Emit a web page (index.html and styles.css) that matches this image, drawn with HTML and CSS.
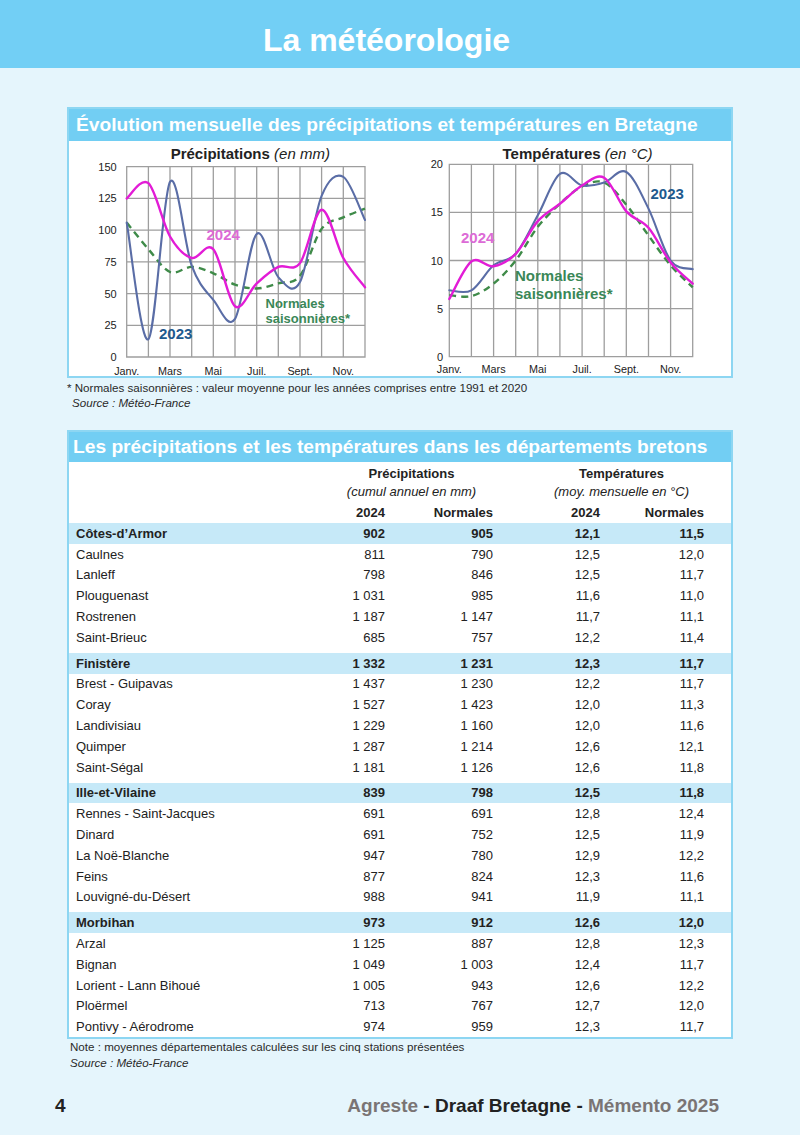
FILE: index.html
```html
<!DOCTYPE html>
<html lang="fr">
<head>
<meta charset="utf-8">
<title>La météorologie</title>
<link rel="stylesheet" href="styles.css">
</head>
<body>
<header class="page-header">
  <h1>La météorologie</h1>
</header>

<main class="content">
  <section class="panel panel-charts">
    <h2 class="panel-title">Évolution mensuelle des précipitations et températures en Bretagne</h2>
    <div class="charts">
      <svg class="chart" width="331" height="235" viewBox="0 0 331 235" data-x0="57.7" data-dx="21.66" data-y0="216" data-ky="1.2687">
        <text class="chart-title" x="181.3" y="18"><tspan class="b">Précipitations</tspan> <tspan class="i">(en mm)</tspan></text>
        <path class="grid" d="M57.7,25.7H296V216H57.7Z M79.4,25.7V216 M101,25.7V216 M122.7,25.7V216 M144.3,25.7V216 M166,25.7V216 M187.7,25.7V216 M209.3,25.7V216 M231,25.7V216 M252.6,25.7V216 M274.3,25.7V216 M57.7,57.4H296 M57.7,89.1H296 M57.7,120.9H296 M57.7,152.6H296 M57.7,184.3H296"/>
        <g class="ylab">
          <text x="47.7" y="29.7">150</text>
          <text x="47.7" y="61.4">125</text>
          <text x="47.7" y="93.1">100</text>
          <text x="47.7" y="124.9">75</text>
          <text x="47.7" y="156.6">50</text>
          <text x="47.7" y="188.3">25</text>
          <text x="47.7" y="220">0</text>
        </g>
        <g class="xlab">
          <text x="57.7" y="233.5">Janv.</text>
          <text x="101" y="233.5">Mars</text>
          <text x="144.3" y="233.5">Mai</text>
          <text x="187.7" y="233.5">Juil.</text>
          <text x="231" y="233.5">Sept.</text>
          <text x="274.3" y="233.5">Nov.</text>
        </g>
        <path class="line norm" data-v="106 85 67 71 66 57 54 58 64 101 110 117"/>
        <path class="line y2023" data-v="106 14 138 72 45 30 97 63 59 127 142 108"/>
        <path class="line y2024" data-v="125 137 95 78 85 40 58 71 74 116 78 55"/>
        <text class="lab lab-2024" x="137.5" y="99">2024</text>
        <text class="lab lab-2023" x="90" y="198">2023</text>
        <text class="lab lab-norm lab-sm" x="196.5" y="166.5">Normales</text>
        <text class="lab lab-norm lab-sm" x="196.5" y="182">saisonnières*</text>
      </svg>
      <svg class="chart" width="331" height="235" viewBox="0 0 331 235" data-x0="49.3" data-dx="22.13" data-y0="215.7" data-ky="9.62">
        <text class="chart-title" x="177.5" y="17.5"><tspan class="b">Températures</tspan> <tspan class="i">(en °C)</tspan></text>
        <path class="grid" d="M49.3,23.3H292.7V215.7H49.3Z M71.4,23.3V215.7 M93.6,23.3V215.7 M115.7,23.3V215.7 M137.8,23.3V215.7 M159.9,23.3V215.7 M182.1,23.3V215.7 M204.2,23.3V215.7 M226.3,23.3V215.7 M248.5,23.3V215.7 M270.6,23.3V215.7 M49.3,71.4H292.7 M49.3,119.5H292.7 M49.3,167.6H292.7"/>
        <g class="ylab">
          <text x="43" y="27.3">20</text>
          <text x="43" y="75.4">15</text>
          <text x="43" y="123.5">10</text>
          <text x="43" y="171.6">5</text>
          <text x="43" y="219.7">0</text>
        </g>
        <g class="xlab">
          <text x="49.3" y="232">Janv.</text>
          <text x="93.6" y="232">Mars</text>
          <text x="137.8" y="232">Mai</text>
          <text x="182.1" y="232">Juil.</text>
          <text x="226.3" y="232">Sept.</text>
          <text x="270.6" y="232">Nov.</text>
        </g>
        <path class="line norm" data-v="6.4 6.3 7.6 10.0 13.5 15.9 17.7 18.1 15.8 12.6 9.5 7.2"/>
        <path class="line y2023" data-v="6.9 6.9 9.5 10.7 14.7 19.0 17.8 18.1 19.2 15.4 10.0 9.1"/>
        <path class="line y2024" data-v="6.0 9.9 9.4 10.7 14.1 15.9 17.8 18.6 15.1 13.4 9.8 7.6"/>
        <text class="lab lab-2024" x="61" y="102">2024</text>
        <text class="lab lab-2023" x="250.5" y="57.5">2023</text>
        <text class="lab lab-norm" x="115" y="140">Normales</text>
        <text class="lab lab-norm" x="115" y="157.5">saisonnières*</text>
      </svg>
    </div>
  </section>

  <div class="notes notes-charts">
    <p>* Normales saisonnières : valeur moyenne pour les années comprises entre 1991 et 2020</p>
    <p class="source">Source : Météo-France</p>
  </div>

  <section class="panel panel-table">
    <h2 class="panel-title">Les précipitations et les températures dans les départements bretons</h2>
    <table class="data">
      <colgroup>
        <col class="c-name"><col class="c-n1"><col class="c-n2"><col class="c-n3"><col class="c-n4">
      </colgroup>
      <thead>
        <tr class="h1">
          <th></th>
          <th colspan="2" class="grp">Précipitations</th>
          <th colspan="2" class="grp grp-t">Températures</th>
        </tr>
        <tr class="h2">
          <th></th>
          <th colspan="2" class="grp sub">(cumul annuel en mm)</th>
          <th colspan="2" class="grp grp-t sub">(moy. mensuelle en °C)</th>
        </tr>
        <tr class="h3">
          <th></th>
          <th class="num">2024</th>
          <th class="num">Normales</th>
          <th class="num">2024</th>
          <th class="num">Normales</th>
        </tr>
      </thead>
      <tbody>
        <tr class="dept"><td>Côtes-d’Armor</td><td>902</td><td>905</td><td>12,1</td><td>11,5</td></tr>
        <tr><td>Caulnes</td><td>811</td><td>790</td><td>12,5</td><td>12,0</td></tr>
        <tr><td>Lanleff</td><td>798</td><td>846</td><td>12,5</td><td>11,7</td></tr>
        <tr><td>Plouguenast</td><td>1&nbsp;031</td><td>985</td><td>11,6</td><td>11,0</td></tr>
        <tr><td>Rostrenen</td><td>1&nbsp;187</td><td>1&nbsp;147</td><td>11,7</td><td>11,1</td></tr>
        <tr><td>Saint-Brieuc</td><td>685</td><td>757</td><td>12,2</td><td>11,4</td></tr>
      </tbody>
      <tbody>
        <tr class="dept"><td>Finistère</td><td>1&nbsp;332</td><td>1&nbsp;231</td><td>12,3</td><td>11,7</td></tr>
        <tr><td>Brest - Guipavas</td><td>1&nbsp;437</td><td>1&nbsp;230</td><td>12,2</td><td>11,7</td></tr>
        <tr><td>Coray</td><td>1&nbsp;527</td><td>1&nbsp;423</td><td>12,0</td><td>11,3</td></tr>
        <tr><td>Landivisiau</td><td>1&nbsp;229</td><td>1&nbsp;160</td><td>12,0</td><td>11,6</td></tr>
        <tr><td>Quimper</td><td>1&nbsp;287</td><td>1&nbsp;214</td><td>12,6</td><td>12,1</td></tr>
        <tr><td>Saint-Ségal</td><td>1&nbsp;181</td><td>1&nbsp;126</td><td>12,6</td><td>11,8</td></tr>
      </tbody>
      <tbody>
        <tr class="dept"><td>Ille-et-Vilaine</td><td>839</td><td>798</td><td>12,5</td><td>11,8</td></tr>
        <tr><td>Rennes - Saint-Jacques</td><td>691</td><td>691</td><td>12,8</td><td>12,4</td></tr>
        <tr><td>Dinard</td><td>691</td><td>752</td><td>12,5</td><td>11,9</td></tr>
        <tr><td>La Noë-Blanche</td><td>947</td><td>780</td><td>12,9</td><td>12,2</td></tr>
        <tr><td>Feins</td><td>877</td><td>824</td><td>12,3</td><td>11,6</td></tr>
        <tr><td>Louvigné-du-Désert</td><td>988</td><td>941</td><td>11,9</td><td>11,1</td></tr>
      </tbody>
      <tbody>
        <tr class="dept"><td>Morbihan</td><td>973</td><td>912</td><td>12,6</td><td>12,0</td></tr>
        <tr><td>Arzal</td><td>1&nbsp;125</td><td>887</td><td>12,8</td><td>12,3</td></tr>
        <tr><td>Bignan</td><td>1&nbsp;049</td><td>1&nbsp;003</td><td>12,4</td><td>11,7</td></tr>
        <tr><td>Lorient - Lann Bihoué</td><td>1&nbsp;005</td><td>943</td><td>12,6</td><td>12,2</td></tr>
        <tr><td>Ploërmel</td><td>713</td><td>767</td><td>12,7</td><td>12,0</td></tr>
        <tr><td>Pontivy - Aérodrome</td><td>974</td><td>959</td><td>12,3</td><td>11,7</td></tr>
      </tbody>
    </table>
  </section>

  <div class="notes notes-table">
    <p>Note : moyennes départementales calculées sur les cinq stations présentées</p>
    <p class="source">Source : Météo-France</p>
  </div>
</main>

<footer class="page-footer">
  <span class="page-num">4</span>
  <span class="brand"><span class="grey">Agreste</span> - Draaf Bretagne - <span class="grey">Mémento 2025</span></span>
</footer>

<script src="script.js"></script>
</body>
</html>
```

FILE: styles.css
```css
* { box-sizing: border-box; margin: 0; padding: 0; }

html { background: #E5F5FC; }

body {
  width: 800px;
  min-height: 1135px;
  background: #E5F5FC;
  font-family: "Liberation Sans", Arial, sans-serif;
  color: #222;
}

.page-header {
  height: 68px;
  padding-top: 13px;
  padding-right: 27px;
  background: #72CFF5;
  text-align: center;
}

.page-header h1 {
  font-size: 32px;
  line-height: 55px;
  font-weight: bold;
  color: #fff;
}

.content {
  padding: 39px 67px 0;
}

.panel {
  border: 2px solid #8DD6F2;
  background: #fff;
}

.panel-title {
  background: #72CEF3;
  color: #fff;
  font-weight: bold;
  font-size: 19.2px;
  line-height: 32px;
  height: 32px;
  padding-left: 7px;
  white-space: nowrap;
}

.panel-table .panel-title {
  height: 30px;
  line-height: 30px;
  padding-left: 4px;
}

.charts {
  display: flex;
  height: 235px;
}

.chart {
  display: block;
  font-family: "Liberation Sans", Arial, sans-serif;
}

.chart-title {
  font-size: 15px;
  fill: #222;
  text-anchor: middle;
}
.chart-title .b { font-weight: bold; }
.chart-title .i { font-style: italic; }

.grid {
  fill: none;
  stroke: #9E9E9E;
  stroke-width: 1.3;
}

.ylab text {
  font-size: 11px;
  fill: #222;
  text-anchor: end;
}

.xlab text {
  font-size: 10.8px;
  fill: #222;
  text-anchor: middle;
}

.line {
  fill: none;
  stroke-linejoin: round;
  stroke-linecap: round;
}
.line.y2024 { stroke: #E21CD6; stroke-width: 2.4; }
.line.y2023 { stroke: #5A6DA6; stroke-width: 2.1; }
.line.norm { stroke: #3F8B49; stroke-width: 2.4; stroke-dasharray: 7 5; stroke-linecap: butt; }

.lab {
  font-weight: bold;
  font-size: 15px;
}
.lab-sm { font-size: 13px; }
.lab-2024 { fill: #DC6BD6; }
.lab-2023 { fill: #1E5A8E; }
.lab-norm { fill: #3A8757; }

.notes {
  font-size: 11.6px;
  line-height: 15px;
  color: #2a2a2a;
}
.notes .source {
  font-style: italic;
  padding-left: 5px;
}
.notes-charts {
  padding-top: 2px;
}
.notes-table {
  padding-left: 3px;
  line-height: 16px;
}
.notes-table .source { padding-left: 0; }

.panel-table {
  margin-top: 20px;
}

.data {
  width: 662px;
  table-layout: fixed;
  border-collapse: separate;
  border-spacing: 0;
  font-size: 13px;
  color: #222;
}

.c-name { width: 261px; }
.c-n1 { width: 55px; }
.c-n2 { width: 108px; }
.c-n3 { width: 107px; }
.c-n4 { width: 131px; }

.data th, .data td {
  padding: 0;
  white-space: nowrap;
}

.data thead th {
  font-weight: bold;
}
.data .h1 th { height: 21px; padding-top: 2px; }
.data .h2 th { height: 16px; }
.data .h3 th { height: 24px; padding-top: 2px; }

.data .grp { text-align: center; }
.data .grp-t { padding-left: 46px; }
.data th.sub { font-weight: normal; font-style: italic; }

.data th.num, .data td + td { text-align: right; }
.data th:last-child, .data td:last-child { padding-right: 27px; }
.data .grp.grp-t { padding-right: 27px; }

.data td {
  height: 20.8px;
}
.data td:first-child { padding-left: 7px; }

.data tr.dept td {
  font-weight: bold;
  background: #C6E9F8;
  background-clip: padding-box;
}
.data tbody + tbody tr.dept td {
  border-top: 5px solid #fff;
  height: 25.8px;
}

.page-footer {
  display: flex;
  justify-content: space-between;
  align-items: center;
  padding: 0 81px 0 55px;
  margin-top: 24px;
  font-size: 19px;
  font-weight: bold;
  color: #222;
}
.page-footer .grey { color: #7A7474; }
```

FILE: script.js
```js
document.querySelectorAll('svg.chart').forEach(function (svg) {
  var x0 = +svg.dataset.x0, dx = +svg.dataset.dx, y0 = +svg.dataset.y0, ky = +svg.dataset.ky;
  svg.querySelectorAll('path[data-v]').forEach(function (p) {
    var pts = p.dataset.v.trim().split(/\s+/).map(function (v, i) {
      return [x0 + i * dx, y0 - parseFloat(v) * ky];
    });
    var f = function (pt) { return pt[0].toFixed(1) + ',' + pt[1].toFixed(1); };
    var d = 'M' + f(pts[0]);
    for (var i = 0; i < pts.length - 1; i++) {
      var a = pts[i - 1] || pts[i], b = pts[i], c = pts[i + 1], e = pts[i + 2] || c;
      var t = 1 / 6;
      var c1 = [b[0] + (c[0] - a[0]) * t, b[1] + (c[1] - a[1]) * t];
      var c2 = [c[0] - (e[0] - b[0]) * t, c[1] - (e[1] - b[1]) * t];
      d += ' C' + f(c1) + ' ' + f(c2) + ' ' + f(c);
    }
    p.setAttribute('d', d);
  });
});
```
